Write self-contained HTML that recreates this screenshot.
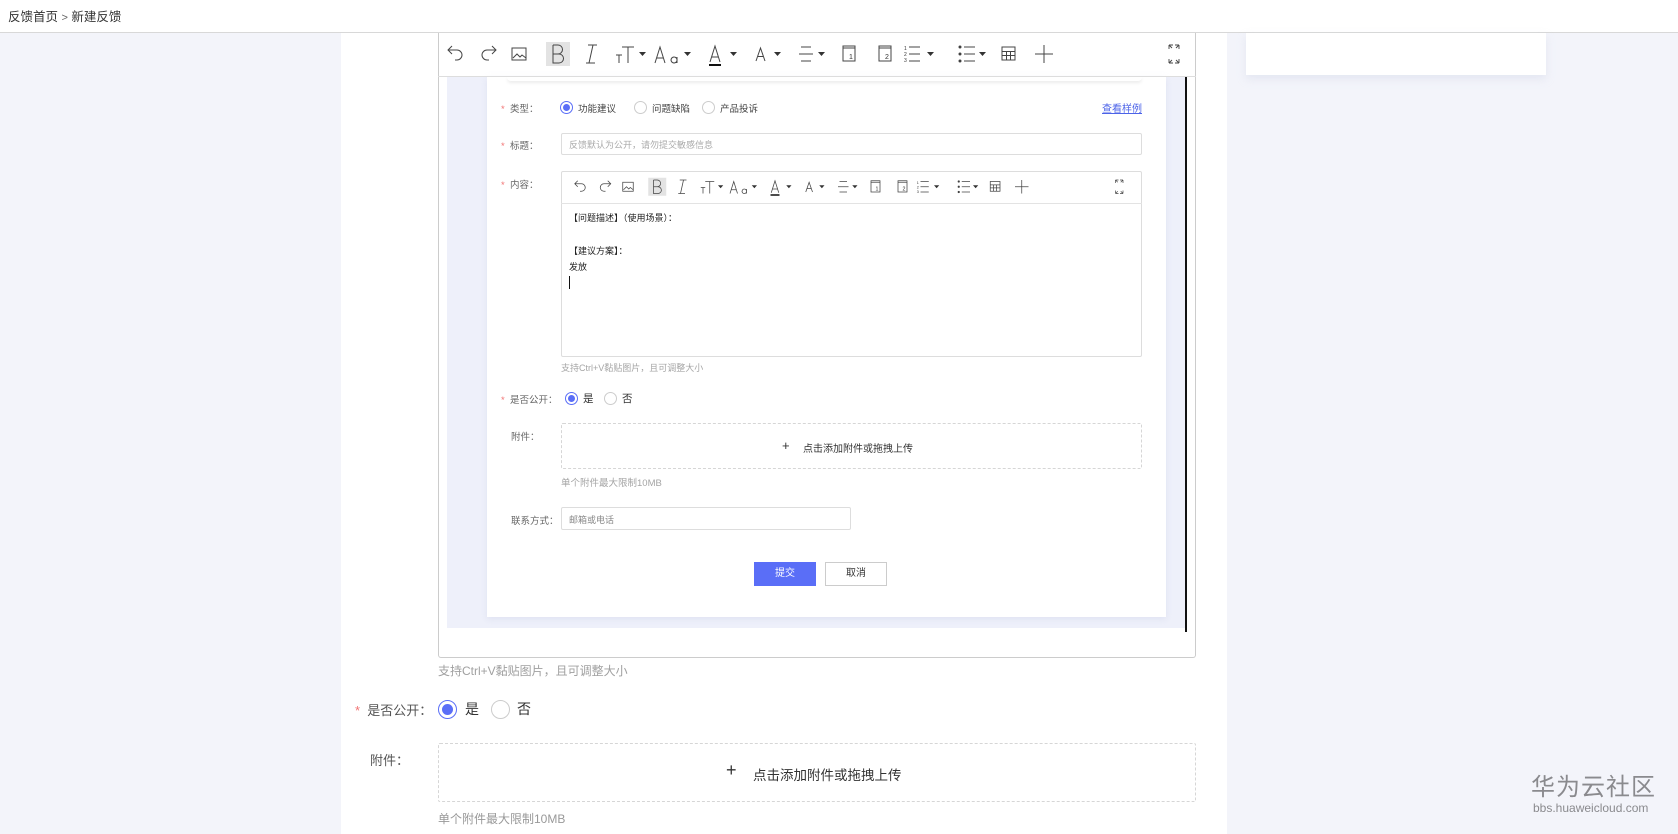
<!DOCTYPE html>
<html><head><meta charset="utf-8">
<style>
*{margin:0;padding:0;box-sizing:border-box}
body{width:1678px;height:834px;overflow:hidden;background:#f3f4fa;font-family:"Liberation Sans","Noto Sans CJK SC",sans-serif;color:#333;position:relative}
.a{position:absolute;white-space:nowrap}
.top{left:0;top:0;width:1678px;height:33px;background:#fff;border-bottom:1px solid #d8d8d8}
.col{left:341px;top:33px;width:886px;height:801px;background:#fff}
.card{left:1246px;top:33px;width:300px;height:42px;background:#fff;box-shadow:0 4px 8px rgba(200,205,225,.35)}
.ed{left:438px;top:33px;width:758px;height:625px;border:1px solid #ccc;border-top:none;border-radius:0 0 3px 3px;background:#fff}
.tb{left:438px;top:33px;width:758px;height:44px;border-bottom:1px solid #ddd}
.s{font-size:9.5px;color:#666}
.st{color:#f27474}
.r{width:13px;height:13px;border-radius:50%;border:1px solid #ccc;background:#fff}
.r.on{border-color:#5a6ef7}
.r.on:after{content:"";position:absolute;left:2px;top:2px;width:7px;height:7px;border-radius:50%;background:#5a6ef7}
.R{width:19px;height:19px;border-radius:50%;border:1px solid #ccc;background:#fff}
.R.on{border-color:#5a6ef7}
.R.on:after{content:"";position:absolute;left:3px;top:3px;width:11px;height:11px;border-radius:50%;background:#5a6ef7}
.inp{border:1px solid #ddd;border-radius:2px;background:#fff}
.hint{color:#a5a5a5}
</style></head><body>
<div class="a top"></div>
<div class="a" style="left:8px;top:6px;font-size:12.5px;color:#333">反馈首页 <span style="color:#666;font-size:11px">&gt;</span> 新建反馈</div>
<div class="a col"></div>
<div class="a card"></div>
<div class="a ed"></div>
<div class="a" style="left:447px;top:77px;width:739px;height:551px;background:#eef0fa"></div>
<div class="a" style="left:487px;top:77px;width:679px;height:540px;background:#fff;box-shadow:0 2px 6px rgba(200,205,230,.4)"></div>
<div class="a" style="left:507px;top:77px;width:635px;height:4px;background:#fff;box-shadow:0 2px 3px rgba(0,0,0,.08);border-radius:0 0 4px 4px"></div>
<div class="a" style="left:1185px;top:77px;width:2px;height:555px;background:#111"></div>
<div class="a tb"></div>
<svg class="a" style="left:438px;top:33px" width="758" height="44" viewBox="0 0 758 44">
<g id="tbx" fill="none" stroke="#444" stroke-width="1" font-family="Liberation Sans,sans-serif">
<path d="M14 13 l-4 4 4 4 M10 17 h9 a5 5 0 0 1 0 10 h-2"/>
<path d="M54 13 l4 4 -4 4 M58 17 h-9 a5 5 0 0 0 0 10 h2"/>
<rect x="74" y="15" width="14" height="12"/><path d="M75 25 l4 -4 3 3 2 -2 4 3"/>
<rect x="108" y="9" width="24" height="24" fill="#e3e3e3" stroke="none"/>
<path d="M115 12 v18 h6 a4.5 4.5 0 0 0 0 -9 h-6 M115 12 h5 a4.5 4.5 0 0 1 0 9"/>
<path d="M150 12 h9 M148 30 h9 M155 12 l-4 18"/>
<path d="M178 22 h6 M181 22 v8 M184 14 h12 M190 14 v16"/>
<path d="M201 19 h7 l-3.5 4z" fill="#333" stroke="none"/>
<path d="M217 30 l5 -16 5 16 M219 25 h6"/><path d="M236 24 a3 3 0 1 0 0.1 0 M239 24 v6"/>
<path d="M246 19 h7 l-3.5 4z" fill="#333" stroke="none"/>
<path d="M272 29 l5 -16 5 16 M274 24 h6"/><rect x="271" y="31" width="12" height="2" fill="#111" stroke="none"/>
<path d="M292 19 h7 l-3.5 4z" fill="#333" stroke="none"/>
<path d="M318 28 l4.5 -13 4.5 13 M320 23.5 h5"/>
<path d="M336 19 h7 l-3.5 4z" fill="#333" stroke="none"/>
<path d="M363 14 h10 M361 21 h14 M363 28 h10"/>
<path d="M380 19 h7 l-3.5 4z" fill="#333" stroke="none"/>
<rect x="405" y="13" width="12" height="15"/><path d="M405 15 h12"/><text x="411" y="26" font-size="7" fill="#333" stroke="none">1</text>
<rect x="441" y="13" width="12" height="15"/><path d="M441 15 h12"/><text x="447" y="26" font-size="7" fill="#333" stroke="none">2</text>
<text x="466" y="17" font-size="5" fill="#333" stroke="none">1</text><text x="466" y="23" font-size="5" fill="#333" stroke="none">2</text><text x="466" y="29" font-size="5" fill="#333" stroke="none">3</text>
<path d="M471 14 h11 M471 21 h11 M471 28 h11"/>
<path d="M489 19 h7 l-3.5 4z" fill="#333" stroke="none"/>
<circle cx="522" cy="14" r="1" fill="#333"/><circle cx="522" cy="21" r="1" fill="#333"/><circle cx="522" cy="28" r="1" fill="#333"/>
<path d="M526 14 h11 M526 21 h11 M526 28 h11"/>
<path d="M541 19 h7 l-3.5 4z" fill="#333" stroke="none"/>
<rect x="564" y="14" width="13" height="13"/><path d="M564 18.5 h13 M564 22.5 h13 M568.5 18.5 v8.5 M572.5 18.5 v8.5"/>
<path d="M606 12 v18 M597 21 h18"/>
<path d="M731 12 v4 M731 12 h4 M731 12 l3 3 M741 12 v4 M741 12 h-4 M741 12 l-3 3 M731 30 v-4 M731 30 h4 M731 30 l3 -3 M741 30 v-4 M741 30 h-4 M741 30 l-3 -3" stroke-width="0.9"/>
</g></svg>

<div class="a s" style="left:501px;top:101px"><span class="st">*</span>&nbsp; 类型：</div>
<div class="a r on" style="left:560px;top:101px"></div><div class="a s" style="left:578px;top:101px;color:#444">功能建议</div>
<div class="a r" style="left:634px;top:101px"></div><div class="a s" style="left:652px;top:101px;color:#444">问题缺陷</div>
<div class="a r" style="left:702px;top:101px"></div><div class="a s" style="left:720px;top:101px;color:#444">产品投诉</div>
<div class="a" style="left:1102px;top:100px;font-size:10px;color:#4c63e8;text-decoration:underline">查看样例</div>
<div class="a s" style="left:501px;top:138px"><span class="st">*</span>&nbsp; 标题：</div>
<div class="a inp" style="left:561px;top:133px;width:581px;height:22px"></div>
<div class="a" style="left:569px;top:138px;font-size:9px;color:#aaa">反馈默认为公开，请勿提交敏感信息</div>
<div class="a s" style="left:501px;top:177px"><span class="st">*</span>&nbsp; 内容：</div>
<div class="a inp" style="left:561px;top:171px;width:581px;height:186px"></div>
<div class="a" style="left:561px;top:203px;width:581px;height:1px;background:#e3e3e3"></div>
<svg class="a" style="left:561px;top:171px" width="581" height="33" viewBox="0 0 758 44">
<use href="#tbx"/></svg>
<div class="a" style="left:569px;top:211px;font-size:9px;color:#222">【问题描述】（使用场景）：</div>
<div class="a" style="left:569px;top:244px;font-size:9px;color:#222">【建议方案】：</div>
<div class="a" style="left:569px;top:260px;font-size:9px;color:#222">发放</div>
<div class="a" style="left:569px;top:276px;width:1px;height:13px;background:#111"></div>
<div class="a hint" style="left:561px;top:361px;font-size:9px">支持Ctrl+V黏贴图片，且可调整大小</div>
<div class="a s" style="left:501px;top:392px"><span class="st">*</span>&nbsp; 是否公开：</div>
<div class="a r on" style="left:565px;top:392px"></div><div class="a" style="left:583px;top:391px;font-size:10.5px">是</div>
<div class="a r" style="left:604px;top:392px"></div><div class="a" style="left:622px;top:391px;font-size:10.5px">否</div>
<div class="a s" style="left:511px;top:429px">附件：</div>
<div class="a" style="left:561px;top:423px;width:581px;height:46px;border:1px dashed #d6d6d6;border-radius:2px"></div>
<div class="a" style="left:782px;top:438px;font-size:13px">+</div>
<div class="a" style="left:803px;top:440px;font-size:10px">点击添加附件或拖拽上传</div>
<div class="a hint" style="left:561px;top:475px;font-size:9.5px">单个附件最大限制10MB</div>
<div class="a s" style="left:511px;top:513px">联系方式：</div>
<div class="a inp" style="left:561px;top:507px;width:290px;height:23px"></div>
<div class="a" style="left:569px;top:513px;font-size:9px;color:#888">邮箱或电话</div>
<div class="a" style="left:754px;top:562px;width:62px;height:24px;background:#5a6ef7;color:#fff;font-size:10px;text-align:center;line-height:24px">提交</div>
<div class="a" style="left:825px;top:562px;width:62px;height:24px;border:1px solid #ccc;font-size:10px;text-align:center;line-height:22px">取消</div>

<div class="a hint" style="left:438px;top:662px;font-size:12px;color:#a0a0a0">支持Ctrl+V黏贴图片，且可调整大小</div>
<div class="a" style="left:355px;top:700px;font-size:13px;color:#555"><span class="st">*</span>&nbsp; 是否公开：</div>
<div class="a R on" style="left:438px;top:700px"></div><div class="a" style="left:465px;top:699px;font-size:14px">是</div>
<div class="a R" style="left:491px;top:700px"></div><div class="a" style="left:517px;top:699px;font-size:14px">否</div>
<div class="a" style="left:370px;top:750px;font-size:13px;color:#555">附件：</div>
<div class="a" style="left:438px;top:743px;width:758px;height:59px;border:1px dashed #d6d6d6;border-radius:2px"></div>
<div class="a" style="left:726px;top:760px;font-size:18px">+</div>
<div class="a" style="left:753px;top:764px;font-size:13.5px">点击添加附件或拖拽上传</div>
<div class="a hint" style="left:438px;top:810px;font-size:12px;color:#999">单个附件最大限制10MB</div>

<div class="a" style="left:1531px;top:767px;font-size:24px;color:#8a8a8e;letter-spacing:1px">华为云社区</div>
<div class="a" style="left:1533px;top:801px;font-size:12px;color:#8a8a8e">bbs.huaweicloud.com</div>
</body></html>
